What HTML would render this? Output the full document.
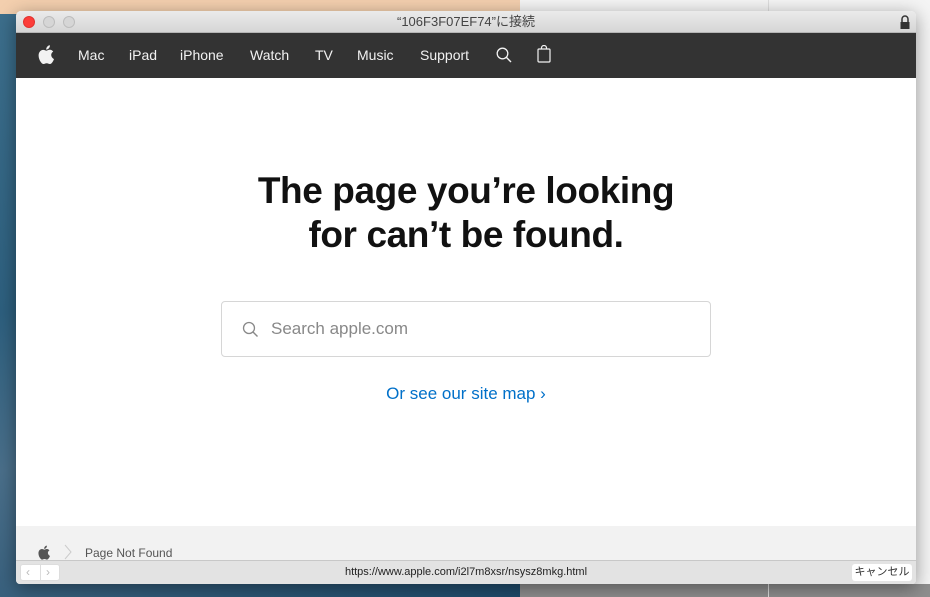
<!DOCTYPE html>
<html><head><meta charset="utf-8"><style>
*{margin:0;padding:0;box-sizing:border-box}
body{width:930px;height:597px;overflow:hidden;position:relative;font-family:"Liberation Sans","Noto Sans CJK JP",sans-serif;background:#e9e9e9}
.bg1{position:absolute;left:0;top:0;width:520px;height:597px;background:linear-gradient(160deg,#3d6f8c 0%,#2d5f7e 40%,#4a6f8a 60%,#1e4a6a 100%)}
.bg0{position:absolute;left:0;top:0;width:520px;height:14px;background:#f3cfae}
.bg2{position:absolute;left:520px;top:0;width:410px;height:597px;background:#f4f4f4}
.bg3{position:absolute;left:520px;top:584px;width:410px;height:13px;background:#8e8e8e}
.bg4{position:absolute;left:768px;top:0;width:1px;height:597px;background:#ddd}
.win{position:absolute;left:16px;top:11px;width:900px;height:573px;background:#fff;border-radius:5px 5px 4px 4px;overflow:hidden;box-shadow:0 4px 18px rgba(0,0,0,.4)}
.title{height:22px;background:linear-gradient(#ebebeb,#d6d6d6);border-bottom:1px solid #b5b5b5;text-align:center;font-size:13px;line-height:22px;color:#444;position:relative}
.dot{position:absolute;top:5px;width:12px;height:12px;border-radius:50%;background:#d6d6d6;border:1px solid #bdbdbd}
.nav{height:45px;background:#333;position:relative;color:#f2f2f2;font-size:14px}
.nav span{position:absolute;top:14px}
.main{height:448px;position:relative}
h1{position:absolute;left:0;width:900px;top:91px;text-align:center;font-size:37px;line-height:44px;font-weight:bold;color:#111;letter-spacing:-0.4px}
.search{position:absolute;left:205px;top:223px;width:490px;height:56px;border:1px solid #d6d6d6;border-radius:4px}
.search span{position:absolute;left:49px;top:17px;font-size:17px;color:#888}
.link{position:absolute;left:0;width:900px;top:306px;text-align:center;font-size:17px;color:#0070c9}
.foot{height:34px;background:#f2f2f2;position:relative;font-size:12px;color:#555}
.status{height:24px;background:#e3e3e3;border-top:1px solid #c8c8c8;position:relative;font-size:11px;color:#222;text-align:center;line-height:23px}
</style></head><body>
<div class="bg1"></div><div class="bg0"></div><div class="bg2"></div><div class="bg3"></div><div class="bg4"></div>
<div class="win">
 <div class="title">“106F3F07EF74”に接続
  <div class="dot" style="left:7px;background:#fc3d39;border-color:#e0332f"></div>
  <div class="dot" style="left:27px"></div>
  <div class="dot" style="left:47px"></div>
  <svg style="position:absolute;right:6px;top:4px" width="10" height="14" viewBox="0 0 10 14"><path d="M2 7V4a3 3 0 0 1 6 0v3" fill="none" stroke="#333" stroke-width="1.5"/><rect x="0.5" y="7" width="9" height="7" fill="#333"/></svg>
 </div>
 <div class="nav">
  <svg style="position:absolute;left:22px;top:12px" width="16" height="19" viewBox="0 0 16 19"><path d="M13.2 10.1c0-2.3 1.900-3.4 2-3.5-1.1-1.6-2.8-1.8-3.4-1.8-1.4-.1-2.8.9-3.5.9-.7 0-1.8-.8-3-.8C3.7 4.9 2.2 5.8 1.4 7.2c-1.7 2.9-.4 7.2 1.2 9.5.8 1.1 1.7 2.4 3 2.3 1.2 0 1.6-.8 3.1-.8 1.4 0 1.8.8 3.1.8 1.3 0 2.1-1.2 2.9-2.3.9-1.3 1.3-2.6 1.3-2.7 0 0-2.5-1-2.8-3.9zM10.9 3.3c.6-.8 1.1-1.9 1-3-.9 0-2.1.6-2.7 1.4-.6.7-1.1 1.8-1 2.9 1 .1 2.1-.5 2.7-1.3z" fill="#f2f2f2"/></svg>
  <span style="left:62px">Mac</span><span style="left:113px">iPad</span><span style="left:164px">iPhone</span><span style="left:234px">Watch</span><span style="left:299px">TV</span><span style="left:341px">Music</span><span style="left:404px">Support</span>
  <svg style="position:absolute;left:480px;top:14px" width="16" height="16" viewBox="0 0 16 16"><circle cx="6.5" cy="6.5" r="5.3" fill="none" stroke="#f2f2f2" stroke-width="1.3"/><path d="M10.3 10.3L15 15" stroke="#f2f2f2" stroke-width="1.4"/></svg>
  <svg style="position:absolute;left:521px;top:12px" width="14" height="18" viewBox="0 0 14 18"><rect x="1" y="4" width="12" height="13" rx="1" fill="none" stroke="#f2f2f2" stroke-width="1.2"/><path d="M4.5 4V3a2.5 2.5 0 0 1 5 0v1" fill="none" stroke="#f2f2f2" stroke-width="1.2"/></svg>
 </div>
 <div class="main">
  <h1>The page you’re looking<br>for can’t be found.</h1>
  <div class="search">
   <svg style="position:absolute;left:20px;top:19px" width="17" height="17" viewBox="0 0 17 17"><circle cx="7" cy="7" r="5.5" fill="none" stroke="#888" stroke-width="1.3"/><path d="M11 11l4.5 4.5" stroke="#888" stroke-width="1.4"/></svg>
   <span>Search apple.com</span>
  </div>
  <div class="link">Or see our site map ›</div>
 </div>
 <div class="foot">
  <svg style="position:absolute;left:22px;top:19px" width="12" height="15" viewBox="0 0 16 19"><path d="M13.2 10.1c0-2.3 1.9-3.4 2-3.5-1.1-1.6-2.8-1.8-3.4-1.8-1.4-.1-2.8.9-3.5.9-.7 0-1.800-.8-3-.8C3.7 4.9 2.2 5.8 1.4 7.2c-1.7 2.9-.4 7.2 1.2 9.5.8 1.1 1.7 2.4 3 2.3 1.2 0 1.6-.8 3.1-.8 1.4 0 1.8.8 3.1.8 1.3 0 2.1-1.2 2.9-2.3.9-1.3 1.3-2.6 1.3-2.7 0 0-2.5-1-2.8-3.9zM10.9 3.3c.6-.8 1.1-1.9 1-3-.9 0-2.1.6-2.7 1.4-.6.7-1.1 1.8-1 2.9 1 .1 2.1-.5 2.7-1.3z" fill="#555"/></svg>
  <svg style="position:absolute;left:48px;top:18px" width="8" height="16" viewBox="0 0 8 16"><path d="M1 1l6 7-6 7" fill="none" stroke="#ccc"/></svg>
  <span style="position:absolute;left:69px;top:20px">Page Not Found</span>
 </div>
 <div class="status">https://www.apple.com/i2l7m8xsr/nsysz8mkg.html
  <div style="position:absolute;left:4px;top:3px;width:40px;height:17px;background:#fff;border-radius:3px;border:1px solid #ddd;color:#bbb;line-height:15px;text-align:left;font-size:12px"><span style="position:absolute;left:5px">‹</span><span style="position:absolute;left:25px">›</span><div style="position:absolute;left:19px;top:0;width:1px;height:15px;background:#ddd"></div></div>
  <div style="position:absolute;right:4px;top:3px;width:60px;height:17px;background:#fff;border-radius:3px;line-height:17px;font-size:11px;color:#333">キャンセル</div>
 </div>
</div>
</body></html>
